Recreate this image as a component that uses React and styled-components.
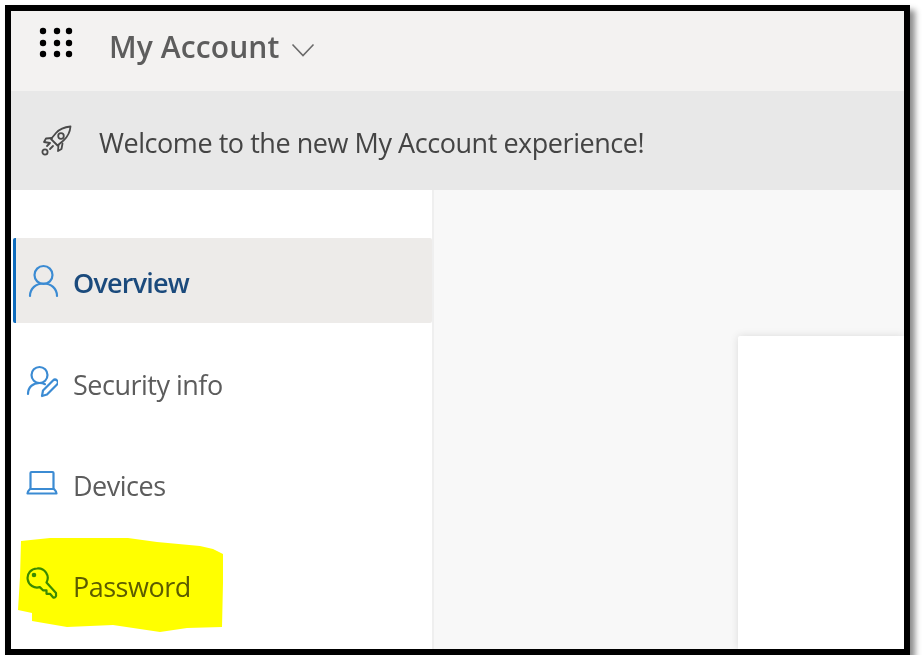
import React from 'react';
import styled, {createGlobalStyle} from 'styled-components';

const GlobalStyle = createGlobalStyle`
  html, body {
    margin: 0;
    padding: 0;
    background: #fff;
    font-family: "Open Sans", "Noto Sans", "Liberation Sans", sans-serif;
  }
`

const Frame = styled.div`
  position: relative;
  box-sizing: border-box;
  width: 905px;
  height: 650px;
  margin: 5px 0 0 5px;
  border: 6px solid #000;
  box-shadow: 5px 5px 6px rgba(0, 0, 0, 0.45);
  display: flex;
  flex-direction: column;
  overflow: hidden;
`

const Header = styled.header`
  height: 80px;
  flex: none;
  background: #f3f2f1;
  display: flex;
  align-items: flex-start;
`

const Waffle = styled.svg`
  margin: 15px 0 0 28px;
  flex: none;
`

const AppName = styled.div`
  margin: 16px 0 0 36px;
  font-size: 30px;
  line-height: 40px;
  font-weight: 600;
  color: #5d5d5d;
  letter-spacing: 0.1px;
  filter: blur(0.35px);
`

const Chevron = styled.svg`
  margin: 32px 0 0 12px;
  flex: none;
`

const Banner = styled.div`
  height: 99px;
  flex: none;
  background: #e8e8e8;
  display: flex;
  align-items: center;
  padding-left: 30px;
  gap: 27px;
`

const BannerText = styled.span`
  font-size: 27px;
  color: #444;
  letter-spacing: -0.45px;
  margin-top: 4px;
  filter: blur(0.35px);
`

const Body = styled.div`
  flex: 1;
  display: flex;
  min-height: 0;
`

const Sidebar = styled.nav`
  width: 419px;
  flex: none;
  background: #fff;
  border-right: 2px solid #efefef;
  padding: 48px 0 0 2px;
  display: flex;
  flex-direction: column;
  gap: 16px;
`

const NavRow = styled.a`
  height: 85px;
  flex: none;
  box-sizing: border-box;
  display: flex;
  align-items: center;
  gap: ${props => props.$active ? '14px' : '15px'};
  padding-left: ${props => props.$active ? '12px' : '13px'};
  background: ${props => props.$active ? '#edebe9' : 'transparent'};
  border-left: ${props => props.$active ? '3px solid #0f6cbd' : '0'};
  border-radius: 2px;
  font-size: 27px;
  font-weight: ${props => props.$active ? 600 : 400};
  color: ${props => props.$active ? '#1b4a7c' : '#5c5c5c'};
  letter-spacing: ${props => props.$active ? '-0.8px' : '-0.5px'};
`

const NavLabel = styled.span`
  margin-top: ${props => props.$active ? '4px' : '6px'};
  filter: blur(0.35px);
`

const NavIcon = styled.svg`
  flex: none;
  fill: none;
  stroke: #3b8bd3;
  stroke-width: 2.2;
  stroke-linecap: round;
  stroke-linejoin: round;
`

const Main = styled.main`
  flex: 1;
  background: #f8f8f8;
  padding: 146px 0 0 304px;
`

const Card = styled.div`
  height: 100%;
  background: #fff;
  border-radius: 2px 0 0 0;
  box-shadow: 0 0 8px rgba(0, 0, 0, 0.12);
`

const Highlight = styled.svg`
  position: absolute;
  left: 0;
  top: 0;
  mix-blend-mode: multiply;
  pointer-events: none;
`

const App = () => {
    return (
        <>
            <GlobalStyle/>
            <Frame>
                <Header>
                    <Waffle width="34" height="32" viewBox="0 0 34 32" fill="#000">
                        {[4, 18, 30].map(cx => [5, 17, 28].map(cy => (
                            <circle key={`${cx}-${cy}`} cx={cx} cy={cy} r="3.2"/>
                        )))}
                    </Waffle>
                    <AppName>My Account</AppName>
                    <Chevron width="24" height="14" viewBox="0 0 24 14" fill="none" stroke="#6a6a6a" strokeWidth="1.6">
                        <path d="M1.500 1.500 12 12.500 22.500 1.500"/>
                    </Chevron>
                </Header>
                <Banner>
                    <svg width="31" height="31" viewBox="0 0 31 31" fill="none" stroke="#4a4a4a" strokeWidth="1.8" strokeLinejoin="round" strokeLinecap="round">
                        <path d="M29.500 1.500c-6 .6-11 2.600-14.500 6.500l-5 6 6.500 6.500 6-5c3.900-3.500 6.500-8 7-14Z"/>
                        <circle cx="20" cy="11" r="2.800"/>
                        <path d="M11 13 5 13.500 3 17l6 1M17.500 20l-.5 6 3.500-2 1-5.500M9 18l-3 3M12 21l-3 3"/>
                        <circle cx="4" cy="27" r="2.600"/>
                    </svg>
                    <BannerText>Welcome to the new My Account experience!</BannerText>
                </Banner>
                <Body>
                    <Sidebar>
                        <NavRow $active>
                            <NavIcon width="31" height="34" viewBox="0 0 31 34">
                                <circle cx="15.500" cy="11" r="9"/>
                                <path d="M2 32c0-7.500 6-12.500 13.500-12.500S29 24.500 29 32"/>
                            </NavIcon>
                            <NavLabel $active>Overview</NavLabel>
                        </NavRow>
                        <NavRow>
                            <NavIcon width="32" height="33" viewBox="0 0 32 33">
                                <circle cx="13.500" cy="10" r="8"/>
                                <path d="M2 29c0-7 5-11 11.500-11 2 0 4 .4 5.500 1.200"/>
                                <path d="M16 31l1-5.500L27 15.500a2.800 2.800 0 0 1 4 4L21 29.500Z"/>
                            </NavIcon>
                            <NavLabel>Security info</NavLabel>
                        </NavRow>
                        <NavRow>
                            <NavIcon width="32" height="28" viewBox="0 -1.500 32 28">
                                <rect x="4.500" y="1.500" width="23" height="17" rx="1"/>
                                <path d="M1.500 23h29c0-1.500-1-3-2.500-4.500H4C2.500 20 1.500 21.500 1.500 23Z"/>
                            </NavIcon>
                            <NavLabel>Devices</NavLabel>
                        </NavRow>
                        <NavRow>
                            <NavIcon width="32" height="37" viewBox="0 -2 32 37">
                                <path d="M11 1.500a9.500 9.500 0 1 0 2.800 18.600l3.200 3.200h3.500v3.500h3.500l3 3.500c1.500 1 3.500-.5 3-2.500V26L20.500 15.500A9.500 9.500 0 0 0 11 1.500Z"/>
                                <circle cx="8" cy="8" r="1.200" fill="#3b8bd3"/>
                            </NavIcon>
                            <NavLabel>Password</NavLabel>
                        </NavRow>
                    </Sidebar>
                    <Main>
                        <Card/>
                    </Main>
                </Body>
                <Highlight width="893" height="638" viewBox="11 11 893 638">
                    <path fill="#ffff00" d="M21 541 50 538 128 538 157 542 200 546 213 549 223 554 223 583 222 627 187 628 160 632 113 625 67 627 32 621 32 613 18 610 20 577Z"/>
                </Highlight>
            </Frame>
        </>
    );
};

export default App;
